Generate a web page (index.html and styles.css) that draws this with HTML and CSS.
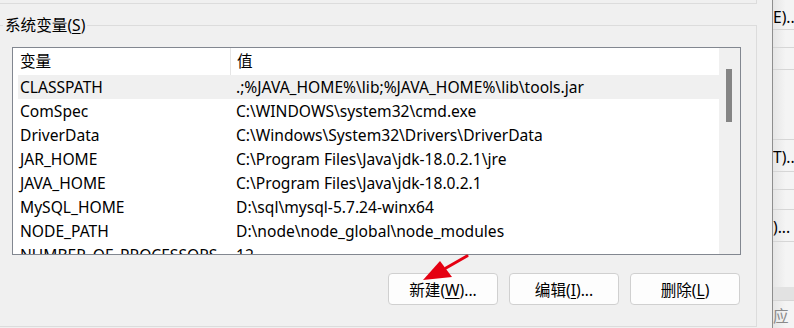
FILE: index.html
```html
<!DOCTYPE html>
<html>
  <head>
    <meta charset="utf-8" />
    <link rel="stylesheet" href="styles.css">
  </head>

  <body>
    <div class="screen">
      <div class="dialog">
        <div class="prev-group"></div>

        <div class="group">
          <div class="group-title">系统变量(<u>S</u>)</div>

          <div class="listbox">
            <div class="rows">
              <div class="row head">
                <div class="name">变量</div>
                <div class="value">值</div>
              </div>
              <div class="row selected">
                <div class="name">CLASSPATH</div>
                <div class="value">.;%JAVA_HOME%\lib;%JAVA_HOME%\lib\tools.jar</div>
              </div>
              <div class="row">
                <div class="name">ComSpec</div>
                <div class="value">C:\WINDOWS\system32\cmd.exe</div>
              </div>
              <div class="row">
                <div class="name">DriverData</div>
                <div class="value">C:\Windows\System32\Drivers\DriverData</div>
              </div>
              <div class="row">
                <div class="name">JAR_HOME</div>
                <div class="value">C:\Program Files\Java\jdk-18.0.2.1\jre</div>
              </div>
              <div class="row">
                <div class="name">JAVA_HOME</div>
                <div class="value">C:\Program Files\Java\jdk-18.0.2.1</div>
              </div>
              <div class="row">
                <div class="name">MySQL_HOME</div>
                <div class="value">D:\sql\mysql-5.7.24-winx64</div>
              </div>
              <div class="row">
                <div class="name">NODE_PATH</div>
                <div class="value">D:\node\node_global\node_modules</div>
              </div>
              <div class="row">
                <div class="name">NUMBER_OF_PROCESSORS</div>
                <div class="value">12</div>
              </div>
            </div>
            <div class="scrollbar">
              <div class="thumb"></div>
            </div>
          </div>

          <div class="buttons">
            <button class="btn">新建(<u>W</u>)...</button>
            <button class="btn">编辑(<u>I</u>)...</button>
            <button class="btn">删除(<u>L</u>)</button>
          </div>

          <svg class="arrow" width="60" height="40" viewBox="0 0 60 40">
            <line x1="57" y1="5" x2="36" y2="17" stroke="#e50012" stroke-width="3" stroke-linecap="round" />
            <polygon points="13,29 30,10 42,26" fill="#e50012" />
          </svg>
        </div>
      </div>

      <div class="behind">
        <div class="bh-item h30 txt">E)...</div>
        <div class="bh-item h18"></div>
        <div class="bh-item h22"></div>
        <div class="bh-item h70"></div>
        <div class="bh-item h32 txt">T)...</div>
        <div class="bh-item h18"></div>
        <div class="bh-item h20"></div>
        <div class="bh-item h32 txt">)...</div>
        <div class="bh-item h45"></div>
        <div class="bh-item band"></div>
        <div class="bh-item last">应</div>
      </div>
    </div>
  </body>
</html>
```

FILE: styles.css
```css
html,
body {
  margin: 0;
  padding: 0;
}

body {
  background: #f0f0f0;
  font-family: "Noto Sans", "Noto Sans CJK SC", sans-serif;
  font-size: 15.6px;
  color: #000;
}

.screen {
  width: 794px;
  height: 328px;
  overflow: hidden;
  display: flex;
}

.dialog {
  width: 772px;
  flex: none;
  border-right: 1px solid #8e8e8e;
}

.prev-group {
  width: 756px;
  height: 3px;
  border-right: 1px solid #dcdcdc;
  border-bottom: 1px solid #dcdcdc;
}

.group {
  position: relative;
  margin-top: 21px;
  width: 756px;
  height: 300px;
  border: 1px solid #dcdcdc;
  border-left: 0;
}

.group-title {
  width: fit-content;
  margin: -11px 0 0 3px;
  padding: 0 2px;
  line-height: 20px;
  background: #f0f0f0;
}

u {
  text-underline-offset: 2px;
}

.listbox {
  margin: 12px 0 0 12px;
  width: 727px;
  height: 206px;
  border: 1px solid #828790;
  background: #fff;
  display: flex;
  overflow: hidden;
}

.rows {
  flex: 1;
  padding-left: 5px;
}

.row {
  display: flex;
  height: 24px;
  line-height: 24px;
  white-space: nowrap;
}

.row.head {
  height: 27px;
  line-height: 27px;
}

.row.selected {
  background: #f0f0f0;
}

.name {
  width: 210px;
  padding-left: 2px;
  flex: none;
  overflow: hidden;
}

.head .name {
  border-right: 1px solid #e5e5e5;
}

.value {
  padding-left: 6px;
}

.scrollbar {
  width: 21px;
  flex: none;
  background: #f0f0f0;
}

.thumb {
  margin: 21px 0 0 7px;
  width: 6px;
  height: 53px;
  background: #858585;
}

.buttons {
  display: flex;
  justify-content: flex-end;
  gap: 11px;
  margin: 18px 0 0 12px;
  width: 728px;
}

.btn {
  width: 110px;
  height: 32px;
  border: 1px solid #d0d0d0;
  border-radius: 4px;
  background: #fdfdfd;
  font: inherit;
  color: #000;
  padding: 0;
}

.arrow {
  position: absolute;
  left: 410px;
  top: 225px;
}

.behind {
  flex: 1;
  background: linear-gradient(to right, #e6e6e6, #f4f4f4 60%);
  overflow: hidden;
}

.bh-item {
  border-bottom: 1px solid #d6d6d6;
  white-space: nowrap;
}

.h30 {
  height: 29px;
}

.h18 {
  height: 17px;
}

.h20 {
  height: 19px;
}

.h22 {
  height: 21px;
}

.h70 {
  height: 69px;
}

.h32 {
  height: 31px;
}

.h45 {
  height: 45px;
  border-bottom: 0;
}

.txt {
  line-height: 34px;
}

.band {
  height: 13px;
  background: #e2e2e2;
}

.last {
  border: 0;
  color: #8a8a8a;
  line-height: 30px;
}
```
